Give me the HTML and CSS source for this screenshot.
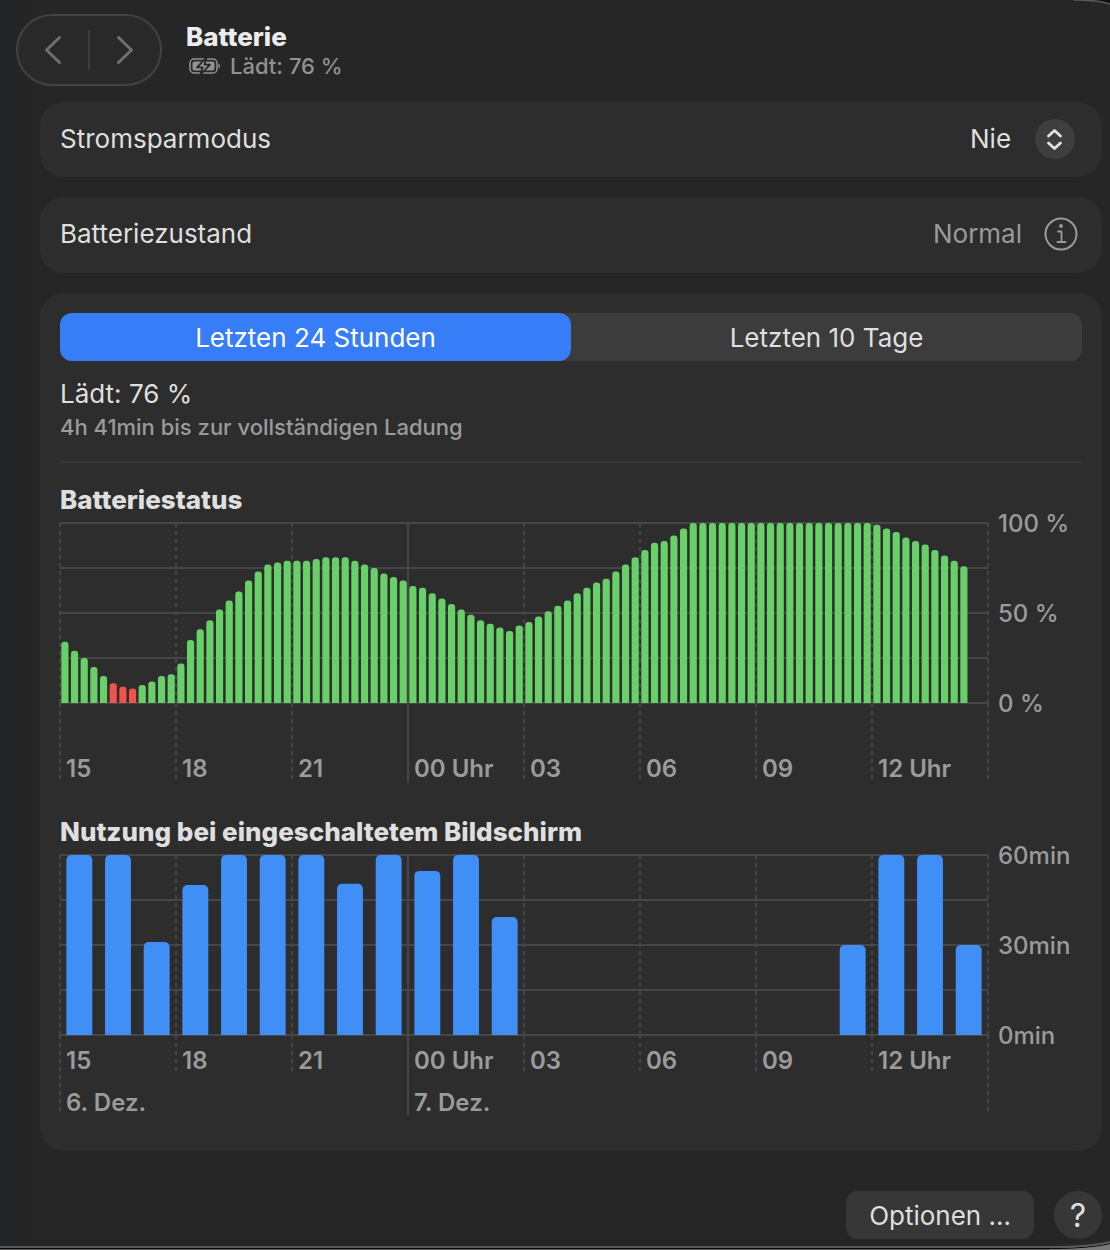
FILE: index.html
```html
<!DOCTYPE html>
<html lang="de">
<head>
<meta charset="utf-8">
<meta name="viewport" content="width=device-width, initial-scale=1">
<title>Batterie</title>
<link rel="stylesheet" href="styles.css">
</head>
<body>
<div class="window">
  <header class="toolbar">
    <nav class="history" aria-label="Verlauf">
      <button class="history-button" type="button" aria-label="Zurück">
        <svg width="18" height="30" viewBox="0 0 18 30"><path d="M15.500 2.500 2.500 15l13 12.500"/></svg>
      </button>
      <span class="history-divider"></span>
      <button class="history-button" type="button" aria-label="Vorwärts">
        <svg width="18" height="30" viewBox="0 0 18 30"><path d="M2.500 2.500 15.500 15 2.500 27.500"/></svg>
      </button>
    </nav>
    <div class="heading">
      <h1 class="title">Batterie</h1>
      <p class="subtitle">
        <svg class="battery-icon" width="32" height="18" viewBox="0 0 32 18" aria-hidden="true">
          <rect x="1" y="2" width="27" height="14" rx="4" fill="none" stroke="currentColor" stroke-width="1.500"/>
          <rect x="3.500" y="4.500" width="22" height="9" rx="2" fill="currentColor"/>
          <path d="M29.500 6.500c2 .7 2 4.300 0 5z" fill="currentColor"/>
          <path d="M17.500.5 8 10.400h5.500L11.500 17.500l9.500-9.900h-5.500z" fill="currentColor" stroke="#262626" stroke-width="1.800" stroke-linejoin="round"/>
        </svg>
        <span>Lädt: 76 %</span>
      </p>
    </div>
  </header>

  <main class="content">
    <section class="card row">
      <span class="row-label" id="mode-label">Stromsparmodus</span>
      <span class="picker">
        <select class="picker-select" aria-labelledby="mode-label">
          <option>Nie</option>
        </select>
        <svg class="picker-icon" width="40" height="40" viewBox="0 0 40 40" aria-hidden="true">
          <circle cx="20" cy="20" r="20" fill="#3e3e3e"/>
          <path d="M13.500 17 19.500 11.500 25.500 17M13.500 24 19.500 29.500 25.500 24" fill="none" stroke="#e2e2e2" stroke-width="2.800" stroke-linecap="round" stroke-linejoin="round"/>
        </svg>
      </span>
    </section>

    <section class="card row row-tall">
      <span class="row-label">Batteriezustand</span>
      <span class="health">
        <span>Normal</span>
        <button class="info-button" type="button" aria-label="Informationen">
          <svg width="34" height="34" viewBox="0 0 34 34">
            <circle cx="17" cy="17" r="15.500" fill="none" stroke="currentColor" stroke-width="2"/>
            <circle cx="17" cy="9" r="1.900" fill="currentColor"/>
            <path d="M14 14.500h3.500V25M13.500 25h8" fill="none" stroke="currentColor" stroke-width="1.800" stroke-linecap="round" stroke-linejoin="round"/>
          </svg>
        </button>
      </span>
    </section>

    <section class="card usage">
      <div class="segments">
        <button class="segment segment-active" type="button" aria-pressed="true">Letzten 24 Stunden</button>
        <button class="segment" type="button" aria-pressed="false">Letzten 10 Tage</button>
      </div>
      <div class="charge">
        <p class="charge-level">Lädt: 76 %</p>
        <p class="charge-time">4h 41min bis zur vollständigen Ladung</p>
      </div>

      <h2 class="chart-title">Batteriestatus</h2>
      <div class="chart">
        <svg class="plot" id="level-plot" role="img" aria-label="Batteriestatus"></svg>
        <div class="hours hours-level">
          <span>15</span><span>18</span><span>21</span><span>00 Uhr</span><span>03</span><span>06</span><span>09</span><span>12 Uhr</span>
        </div>
        <div class="scale"><span>100 %</span><span>50 %</span><span>0 %</span></div>
      </div>

      <h2 class="chart-title">Nutzung bei eingeschaltetem Bildschirm</h2>
      <div class="chart">
        <svg class="plot" id="usage-plot" role="img" aria-label="Nutzung bei eingeschaltetem Bildschirm"></svg>
        <div class="hours hours-usage">
          <span>15</span><span>18</span><span>21</span><span>00 Uhr</span><span>03</span><span>06</span><span>09</span><span>12 Uhr</span>
          <span class="day">6. Dez.</span><span class="day">7. Dez.</span>
        </div>
        <div class="scale"><span>60min</span><span>30min</span><span>0min</span></div>
      </div>
    </section>
  </main>

  <footer class="actions">
    <button class="options-button" type="button">Optionen ...</button>
    <button class="help-button" type="button" aria-label="Hilfe">?</button>
  </footer>

  <svg class="corner corner-top" width="60" height="6" viewBox="0 0 60 6" aria-hidden="true">
    <path d="M24 0Q48 0 60 4V0z" fill="#101010"/>
    <path d="M24 0Q48 0 60 4" fill="none" stroke="#5a5a5a" stroke-width="1.500"/>
  </svg>
  <svg class="corner corner-bottom" width="60" height="10" viewBox="0 0 60 10" aria-hidden="true">
    <path d="M0 7Q40 7 60 2V10H0z" fill="#7a7a7a"/>
    <path d="M0 8.500Q40 8.500 60 3.500" fill="none" stroke="#080808" stroke-width="1.200"/>
    <path d="M0 7Q40 7 60 2" fill="none" stroke="#585858" stroke-width="2"/>
  </svg>
</div>
<script src="charts.js"></script>
</body>
</html>
```
FILE: styles.css
```css
* {
  box-sizing: border-box;
}

body {
  margin: 0;
  background: #5c5c5c;
  color: #dfdfdf;
  font: 400 26px/32px Inter, "Liberation Sans", sans-serif;
}

h1, h2, p {
  margin: 0;
}

button, select {
  margin: 0;
  padding: 0;
  border: 0;
  background: none;
  color: inherit;
  font: inherit;
}

.window {
  position: relative;
  min-height: calc(100vh - 2px);
  margin-bottom: 2px;
  padding: 14px 8px 7px 16px;
  border-bottom: 2px solid #585858;
  background: linear-gradient(90deg, #232425 0, #262626 40px);
  box-shadow: 0 1px 0 #080808;
}

.corner {
  position: absolute;
  right: 0;
}

.corner-top {
  top: 0;
}

.corner-bottom {
  bottom: -4px;
}

.toolbar {
  display: flex;
  gap: 24px;
  height: 72px;
}

.history {
  display: flex;
  align-items: center;
  justify-content: center;
  width: 146px;
  border: 2px solid #424242;
  border-radius: 36px;
  background: #292929;
}

.history-button {
  display: grid;
  place-items: center;
  width: 70px;
  height: 68px;
}

.history-button path {
  fill: none;
  stroke: #707070;
  stroke-width: 3;
  stroke-linecap: round;
  stroke-linejoin: round;
}

.history-divider {
  width: 2px;
  height: 40px;
  background: #3c3c3c;
}

.heading {
  padding-top: 7px;
}

.title {
  color: #ececec;
  font-size: 26px;
  font-weight: 800;
  line-height: 32px;
}

.subtitle {
  display: flex;
  align-items: center;
  gap: 9px;
  padding-left: 3px;
  color: #929292;
  font-size: 22px;
  font-weight: 500;
  line-height: 26px;
}

.content {
  display: grid;
  gap: 20px;
  padding: 16px 0 0 24px;
}

.card {
  border-radius: 24px;
  background: #2d2d2d;
}

.row {
  display: flex;
  align-items: center;
  justify-content: space-between;
  height: 75px;
  padding: 0 24px 2px 20px;
}

.row-tall {
  height: 76px;
}

.picker {
  display: grid;
  align-items: center;
  padding-right: 3px;
}

.picker-select {
  grid-area: 1 / 1;
  width: 105px;
  height: 40px;
  appearance: none;
}

.picker-icon {
  grid-area: 1 / 1;
  justify-self: end;
  pointer-events: none;
}

.health {
  display: flex;
  align-items: center;
  gap: 22px;
  color: #9b9b9b;
}

.info-button {
  height: 34px;
}

.info-button svg {
  display: block;
}

.usage {
  padding: 20px 20px 36px;
}

.segments {
  display: grid;
  grid-template-columns: 1fr 1fr;
  border-radius: 12px;
  background: #3c3c3c;
}

.segment {
  height: 48px;
  padding-top: 2px;
  border-radius: 12px;
}

.segment-active {
  background: #387df8;
  color: #fff;
}

.charge {
  margin-bottom: 20px;
  padding: 17px 0 20px;
  border-bottom: 2px solid #373737;
}

.charge-time {
  padding-top: 3px;
  color: #9b9b9b;
  font-size: 22px;
  font-weight: 500;
  line-height: 28px;
}

.chart-title {
  font-size: 26px;
  font-weight: 800;
  line-height: 34px;
}

.chart {
  display: grid;
  grid-template-columns: 1fr 94px;
  margin-top: 6px;
  color: #9b9b9b;
  font-size: 24px;
  font-weight: 600;
  line-height: 28px;
}

.plot {
  grid-area: 1 / 1;
  width: 100%;
  height: 100%;
  overflow: visible;
}

.hours {
  grid-area: 1 / 1;
  display: grid;
  grid-template-columns: repeat(8, 1fr);
  align-content: start;
  row-gap: 14px;
}

.hours span {
  padding-left: 6px;
  white-space: nowrap;
}

.hours-level {
  height: 292px;
  padding-top: 232px;
}

.hours-usage {
  height: 260px;
  padding-top: 192px;
}

.hours .day {
  grid-column: span 3;
}

.scale {
  display: flex;
  flex-direction: column;
  justify-content: space-between;
  height: 208px;
  margin-top: -13px;
  padding-left: 10px;
  font-weight: 500;
}

.bars {
  overflow: hidden;
}

.grid-line {
  stroke: #464646;
  stroke-width: 2;
}

.grid-line-dashed {
  stroke-dasharray: 4 4;
}

.bar-green {
  fill: #69cf69;
}

.bar-red {
  fill: #ee534e;
}

.bar-blue {
  fill: #408ff7;
}

.actions {
  display: flex;
  justify-content: flex-end;
  gap: 20px;
  padding-top: 40px;
}

.options-button {
  height: 48px;
  padding: 2px 23px 0;
  border-radius: 12px;
  background: #373737;
}

.help-button {
  width: 48px;
  height: 48px;
  padding-top: 2px;
  border-radius: 50%;
  background: #373737;
  font-size: 32px;
}
```
FILE: charts.js
```js
const PLOT_HEIGHT = 180;
const SVG_NS = "http://www.w3.org/2000/svg";

// Charge in percent for every quarter of an hour.
const levels = [
  34, 29, 25, 20, 15, 11, 9, 8, 10, 12, 15, 16, 22, 35, 41, 46, 52, 57, 62, 68, 73, 77, 78, 79,
  79, 79, 80, 81, 81, 81, 79, 77, 75, 72, 70, 68, 65, 64, 61, 58, 55, 52, 49, 46, 44, 42, 40, 43,
  45, 48, 51, 54, 57, 61, 64, 67, 69, 73, 77, 81, 85, 89, 90, 93, 97, 100, 100, 100, 100, 100, 100, 100,
  100, 100, 100, 100, 100, 100, 100, 100, 100, 100, 100, 100, 99, 97, 95, 92, 90, 88, 85, 82, 79, 76
];
const lowSlots = [5, 6, 7];

// Minutes of screen time for every hour.
const minutes = [60, 60, 31, 50, 60, 60, 60, 50.4, 60, 54.7, 60, 39.3, 0, 0, 0, 0, 0, 0, 0, 0, 30, 60, 60, 30];

function add(parent, name, attributes) {
  const node = document.createElementNS(SVG_NS, name);
  for (const key in attributes) node.setAttribute(key, attributes[key]);
  parent.appendChild(node);
  return node;
}

function drawGrid(svg, shortEnd, longEnd, solidEnd) {
  for (let i = 0; i <= 4; i++) {
    const y = i * PLOT_HEIGHT / 4;
    add(svg, "line", { x1: 0, x2: "100%", y1: y, y2: y, class: "grid-line" });
  }
  for (let i = 0; i <= 8; i++) {
    const x = i * 12.5 + "%";
    if (i === 3) {
      add(svg, "line", { x1: x, x2: x, y1: 0, y2: solidEnd, class: "grid-line" });
      continue;
    }
    const end = i % 8 === 0 ? longEnd : shortEnd;
    // The tick below the axis starts its own dash pattern.
    add(svg, "line", { x1: x, x2: x, y1: 0, y2: PLOT_HEIGHT, class: "grid-line grid-line-dashed" });
    add(svg, "line", { x1: x, x2: x, y1: PLOT_HEIGHT, y2: end, class: "grid-line grid-line-dashed" });
  }
}

function drawBars(svg, values, options) {
  const area = add(svg, "svg", { width: "100%", height: PLOT_HEIGHT, class: "bars" });
  const slot = 100 / options.slots;
  values.forEach((value, i) => {
    if (!value) return;
    const height = value / options.max * PLOT_HEIGHT;
    add(area, "rect", {
      x: (i + options.inset) * slot + "%",
      y: PLOT_HEIGHT - height,
      width: options.width * slot + "%",
      height: height + 10,
      rx: options.radius,
      class: options.color(i)
    });
  });
}

const levelPlot = document.getElementById("level-plot");
drawGrid(levelPlot, 256, 256, 260);
drawBars(levelPlot, levels, {
  slots: 96, max: 100, inset: 0.135, width: 0.74, radius: 3,
  color: i => lowSlots.includes(i) ? "bar-red" : "bar-green"
});

const usagePlot = document.getElementById("usage-plot");
drawGrid(usagePlot, 216, 256, 260);
drawBars(usagePlot, minutes, {
  slots: 24, max: 60, inset: 0.165, width: 0.67, radius: 5,
  color: () => "bar-blue"
});
```
